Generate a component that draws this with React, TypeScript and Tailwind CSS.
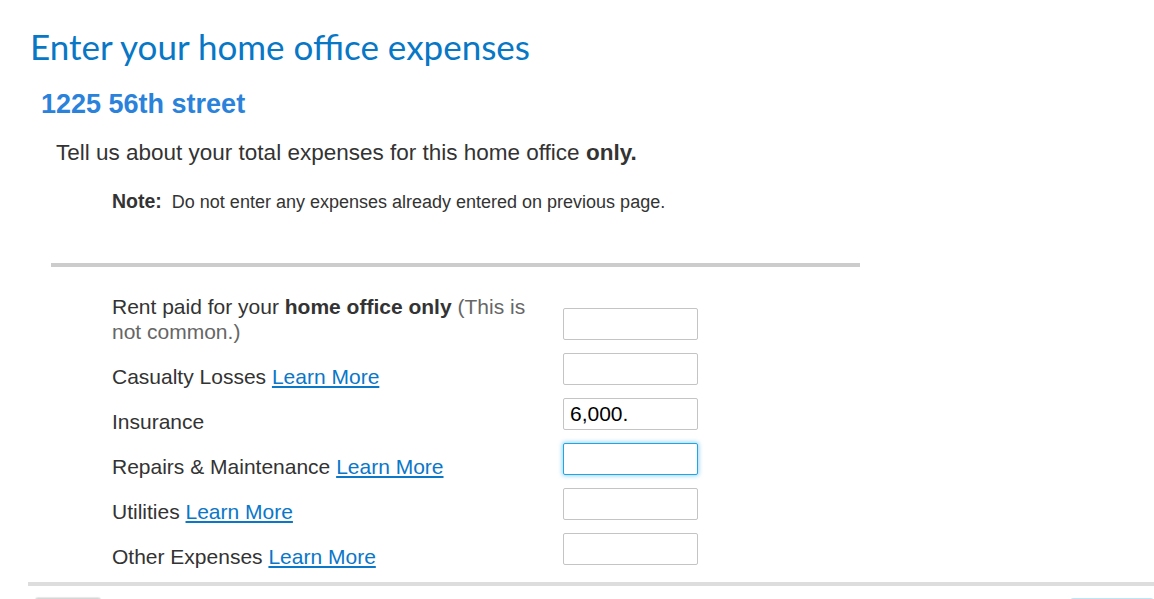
const ARIAL = "font-['Liberation_Sans',Arial,sans-serif]"

type Row = { label: React.ReactNode; value?: string; focused?: boolean }

function LearnMore() {
  return <a href="#" className="text-[#0a77c9] underline underline-offset-2">Learn More</a>
}

const ROWS: Row[] = [
  { label: <>Casualty Losses <LearnMore /></> },
  { label: 'Insurance', value: '6,000.' },
  { label: <>Repairs &amp; Maintenance <LearnMore /></>, focused: true },
  { label: <>Utilities <LearnMore /></> },
  { label: <>Other Expenses <LearnMore /></> },
]

function AmountInput({ value = '', focused = false }: { value?: string; focused?: boolean }) {
  return (
    <input
      defaultValue={value}
      className={`h-[32px] w-[135px] shrink-0 rounded-[2px] border bg-white px-[6px] text-[21px] text-black outline-none ${ARIAL} ${
        focused
          ? 'border-[#22a5e6] shadow-[0_0_4px_1px_rgba(34,165,230,0.45)]'
          : 'border-[#c4c4c4]'
      }`}
    />
  )
}

export default function App() {
  return (
    <div className="min-h-screen bg-white">
      <div className="pt-[26px]">
        <h1 className="pl-[30px] font-['Lato',sans-serif] text-[35px] leading-[40px] text-[#0777c6]">
          Enter your home office expenses
        </h1>
        <h2 className={`mt-[23px] pl-[41px] text-[27px] font-bold leading-[30px] text-[#2a82db] ${ARIAL}`}>
          1225 56th street
        </h2>
        <p className={`mt-[21px] pl-[56px] text-[22.5px] leading-[26px] text-[#333] ${ARIAL}`}>
          Tell us about your total expenses for this home office <b>only.</b>
        </p>
        <p className={`mt-[24px] pl-[112px] text-[18px] leading-[22px] text-[#333] ${ARIAL}`}>
          <b className="text-[19.5px]">Note:</b>&nbsp; Do not enter any expenses already entered on previous page.
        </p>

        <div className="ml-[51px] mt-[50px] h-[4px] w-[809px] bg-[#cccccc]" />

        <div className={`mt-[26px] pl-[112px] text-[21px] leading-[25px] text-[#333] ${ARIAL}`}>
          <div className="flex h-[60px] items-start">
            <div className="w-[451px] pr-[25px] pt-[1px]">
              Rent paid for your <b>home office only</b> <span className="text-[#666]">(This is not common.)</span>
            </div>
            <div className="mt-[15px]">
              <AmountInput />
            </div>
          </div>
          {ROWS.map((row, i) => (
            <div key={i} className="flex h-[45px] items-start">
              <div className="w-[451px] pt-[11px]">{row.label}</div>
              <AmountInput value={row.value} focused={row.focused} />
            </div>
          ))}
        </div>

        <div className="ml-[28px] mt-[4px] h-[4px] bg-[#dddddd]" />

        <div className="mt-[12px] flex justify-between pl-[35px]">
          <button className={`h-[36px] w-[66px] rounded-[3px] border border-[#d6d6d6] bg-white shadow-[0_-1px_1px_rgba(0,0,0,0.1)] ${ARIAL}`} />
          <button className={`h-[36px] w-[84px] rounded-[3px] border border-[#bfe4f3] bg-white ${ARIAL}`} />
        </div>
      </div>
    </div>
  )
}
